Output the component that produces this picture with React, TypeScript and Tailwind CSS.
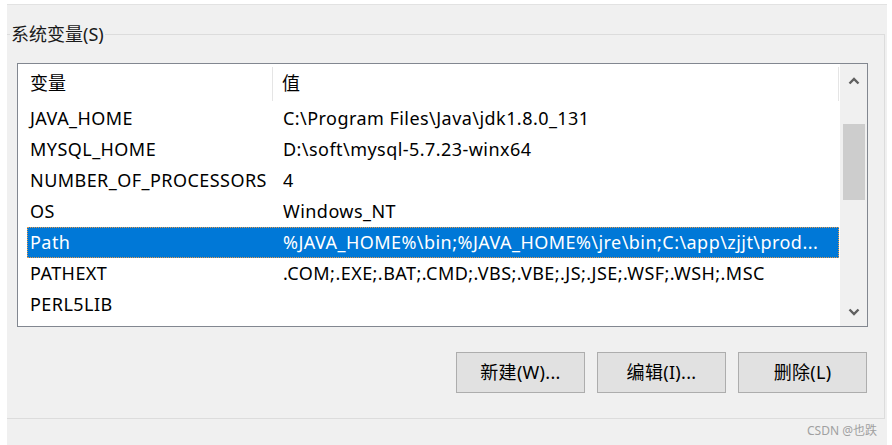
import React from 'react';

const rows = [
  { name: 'JAVA_HOME', value: 'C:\\Program Files\\Java\\jdk1.8.0_131' },
  { name: 'MYSQL_HOME', value: 'D:\\soft\\mysql-5.7.23-winx64' },
  { name: 'NUMBER_OF_PROCESSORS', value: '4' },
  { name: 'OS', value: 'Windows_NT' },
  { name: 'Path', value: '%JAVA_HOME%\\bin;%JAVA_HOME%\\jre\\bin;C:\\app\\zjjt\\prod...', selected: true },
  { name: 'PATHEXT', value: '.COM;.EXE;.BAT;.CMD;.VBS;.VBE;.JS;.JSE;.WSF;.WSH;.MSC' },
  { name: 'PERL5LIB', value: '' },
];

const font = { fontFamily: '"Noto Sans", "Noto Sans CJK SC", sans-serif' };

function Chevron({ up }: { up?: boolean }) {
  return (
    <svg width="12" height="8" viewBox="0 0 12 8">
      <polyline
        points={up ? '1.5,6.5 6,2 10.5,6.5' : '1.5,1.5 6,6 10.5,1.5'}
        fill="none"
        stroke="#606060"
        strokeWidth="2.4"
      />
    </svg>
  );
}

export default function App() {
  return (
    <div className="w-[892px] h-[445px] bg-white overflow-hidden text-black" style={font}>
      <div className="ml-[7px] mt-[4px] w-[880px] h-[441px] bg-[#f0f0f0] border-t border-[#e2e2e2] flex flex-col">
        <fieldset className="mt-[17px] w-[878px] border-t border-r border-b border-[#dcdcdc]">
          <legend className="ml-[3px] px-[1px] text-[18px] leading-[24px] text-[#1a1a1a]">系统变量(S)</legend>

          <div className="ml-[10px] mt-[17px] w-[851px] h-[264px] border border-[#828790] bg-white flex">
            <div className="w-[822px] flex flex-col">
              <div className="h-[39px] flex items-center text-[18px] shrink-0">
                <div className="w-[255px] pl-[12px] h-[34px] flex items-center border-r border-[#e5e5e5]">变量</div>
                <div className="w-[566px] pl-[9px] h-[34px] flex items-center border-r border-[#e5e5e5]">值</div>
              </div>
              {rows.map((r) => (
                <div
                  key={r.name}
                  className={`ml-[9px] w-[812px] h-[31px] flex items-center text-[18px] tracking-[0.45px] whitespace-nowrap ${
                    r.selected ? 'bg-[#0078d7] text-white border border-dotted border-[#e89a4a]' : 'border border-transparent'
                  }`}
                >
                  <div className="w-[255px] pl-[2px]">{r.name}</div>
                  <div className="flex-1 overflow-hidden">{r.value}</div>
                </div>
              ))}
            </div>
            <div className="w-[27px] bg-[#f0f0f0] flex flex-col items-center">
              <div className="h-[34px] flex items-center justify-center">
                <Chevron up />
              </div>
              <div className="mt-[26px] w-[22px] h-[76px] bg-[#cdcdcd]" />
              <div className="flex-1" />
              <div className="h-[28px] flex items-center justify-center">
                <Chevron />
              </div>
            </div>
          </div>

          <div className="mt-[25px] pb-[25px] pr-[17px] flex justify-end gap-[12px]">
            {['新建(W)...', '编辑(I)...', '删除(L)'].map((t) => (
              <button
                key={t}
                className="w-[129px] h-[41px] bg-[#e1e1e1] border border-[#adadad] text-[18px] tracking-[0.3px] text-black"
              >
                {t}
              </button>
            ))}
          </div>
        </fieldset>
        <div className="mt-[3px] pr-[10px] text-right text-[12px] text-[#a0a0a0]">CSDN @也跌</div>
      </div>
    </div>
  );
}
